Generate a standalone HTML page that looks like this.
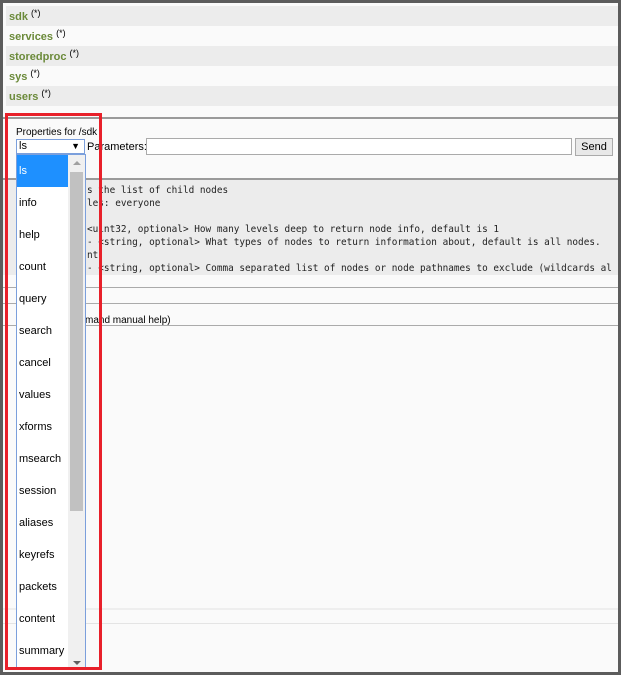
<!DOCTYPE html>
<html><head><meta charset="utf-8"><style>
*{margin:0;padding:0;box-sizing:border-box}
body{width:621px;height:675px;background:#5c5c5c;position:relative;overflow:hidden;font-family:"Liberation Sans",Arial,sans-serif;font-size:11px;color:#000}
#pg{position:absolute;left:3px;top:3px;width:615px;height:669px;background:#fafafa;overflow:hidden}
.row{position:absolute;left:3px;width:612px;height:20px;padding-left:3px;line-height:20px;font-weight:bold;color:#6b8a3a;font-size:11px;padding-top:1px}
.row sup{color:#000;font-weight:normal;font-size:9px;position:relative;top:-4px;vertical-align:baseline;line-height:0}
.ln{position:absolute;left:0;width:615px}
.mono{font-family:"DejaVu Sans Mono","Liberation Mono",monospace;font-size:9.4px;position:absolute;white-space:pre;color:#222}
#dd{position:absolute;left:13px;top:151px;width:70px;height:516px;background:#fff;border:1px solid #7b9fdc;overflow:hidden}
#dd div.it{position:absolute;left:0;width:51px;height:32px;line-height:32px;padding-left:2px;font-size:11px}
#sb{position:absolute;left:51px;top:0;width:17px;height:516px;background:#f0f0f0}
</style></head><body><div id="pg">
<div class="row" style="top:3px;background:#ececec">sdk <sup>(*)</sup></div>
<div class="row" style="top:23px;background:#fafafa">services <sup>(*)</sup></div>
<div class="row" style="top:43px;background:#ececec">storedproc <sup>(*)</sup></div>
<div class="row" style="top:63px;background:#fafafa">sys <sup>(*)</sup></div>
<div class="row" style="top:83px;background:#ececec">users <sup>(*)</sup></div>
<div class="ln" style="top:114px;height:2px;background:#9a9a9a"></div>
<div style="position:absolute;left:13px;top:124px;font-size:10px">Properties for /sdk</div>
<div style="position:absolute;left:13px;top:136px;width:69px;height:15px;border:1px solid #7b9fdc;background:#fff;font-size:11px;padding-left:2px;line-height:13px">ls<span style="position:absolute;right:4px;top:0;font-size:9px">▼</span></div>
<div style="position:absolute;left:84px;top:138px;font-size:11px">Parameters:</div>
<div style="position:absolute;left:143px;top:135px;width:426px;height:17px;border:1px solid #aaa;background:#fff"></div>
<div style="position:absolute;left:572px;top:135px;width:38px;height:18px;border:1px solid #aaa;background:#e8e8e8;font-size:11px;text-align:center;line-height:16px">Send</div>
<div class="ln" style="top:175px;height:2px;background:#9a9a9a"></div>
<div class="ln" style="top:177px;height:95px;background:#ececec"></div>
<div class="mono" style="left:84px;top:182px">s the list of child nodes</div>
<div class="mono" style="left:84px;top:195px">les: everyone</div>
<div class="mono" style="left:84px;top:221px">&lt;uint32, optional&gt; How many levels deep to return node info, default is 1</div>
<div class="mono" style="left:84px;top:234px">- &lt;string, optional&gt; What types of nodes to return information about, default is all nodes.</div>
<div class="mono" style="left:84px;top:247px">nt.</div>
<div class="mono" style="left:84px;top:260px">- &lt;string, optional&gt; Comma separated list of nodes or node pathnames to exclude (wildcards al</div>
<div class="ln" style="top:284px;height:1px;background:#aaa"></div>
<div class="ln" style="top:300px;height:1px;background:#aaa"></div>
<div style="position:absolute;left:82px;top:312px;font-size:10px">mand manual help)</div>
<div class="ln" style="top:322px;height:1px;background:#aaa"></div>
<div class="ln" style="top:605px;height:2px;background:#eee"></div>
<div class="ln" style="top:620px;height:1px;background:#e4e4e4"></div>
<div id="dd">
<div class="it" style="top:0;background:#1e90ff;color:#fff">ls</div>
<div class="it" style="top:32px">info</div>
<div class="it" style="top:64px">help</div>
<div class="it" style="top:96px">count</div>
<div class="it" style="top:128px">query</div>
<div class="it" style="top:160px">search</div>
<div class="it" style="top:192px">cancel</div>
<div class="it" style="top:224px">values</div>
<div class="it" style="top:256px">xforms</div>
<div class="it" style="top:288px">msearch</div>
<div class="it" style="top:320px">session</div>
<div class="it" style="top:352px">aliases</div>
<div class="it" style="top:384px">keyrefs</div>
<div class="it" style="top:416px">packets</div>
<div class="it" style="top:448px">content</div>
<div class="it" style="top:480px">summary</div>
<div id="sb"><div style="position:absolute;left:5px;top:6px;border:4px solid transparent;border-bottom:4px solid #a0a0a0;border-top:0;width:0;height:0"></div>
<div style="position:absolute;left:2px;top:17px;width:13px;height:339px;background:#c1c1c1"></div>
<div style="position:absolute;left:5px;top:506px;border:4px solid transparent;border-top:4px solid #606060;border-bottom:0;width:0;height:0"></div></div>
</div>
<div style="position:absolute;left:2px;top:110px;width:97px;height:557px;border:3px solid #e8202a"></div>
</div></body></html>
